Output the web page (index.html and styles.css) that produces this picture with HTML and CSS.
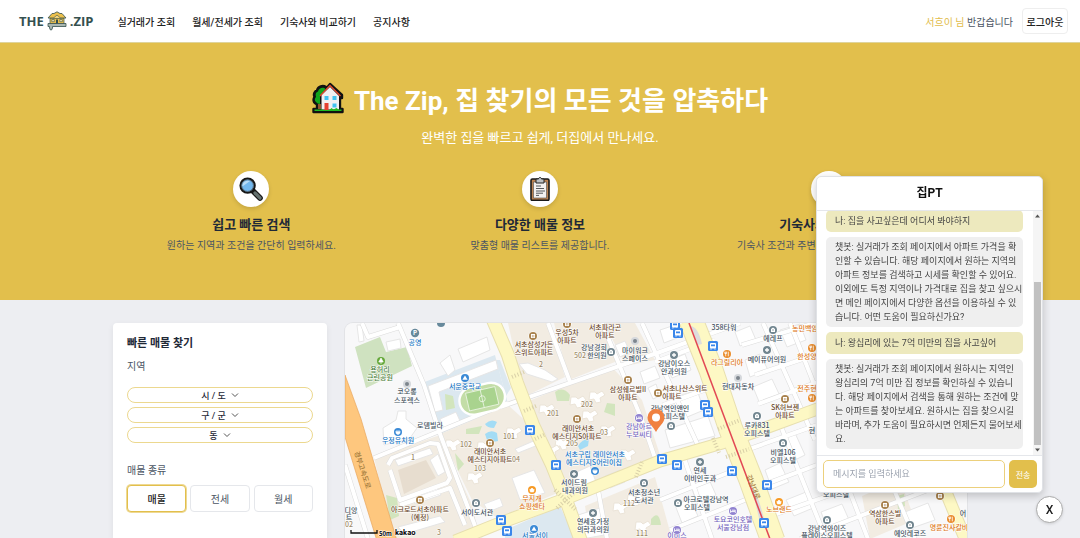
FILE: index.html
```html
<!DOCTYPE html>
<html lang="ko">
<head>
<meta charset="utf-8">
<meta name="viewport" content="width=device-width, initial-scale=1">
<title>THE.ZIP</title>
<link rel="stylesheet" href="styles.css">
</head>
<body>
<div class="app">
  <header class="topbar">
    <a class="logo" href="#" aria-label="THE.ZIP">
      <span>THE</span>
      <svg class="logo-house" viewBox="0 0 20 20" aria-hidden="true">
        <path d="M3 7h14v6H3z" fill="#ecc04c" stroke="#35504f" stroke-width=".7"/>
        <path d="M1 7 5 2.500h2L10 .8l3 1.700h2L19 7z" fill="#ecc04c" stroke="#35504f" stroke-width=".8" stroke-linejoin="round"/>
        <path d="M6.500 7 10 4l3.500 3" fill="#f3d57d" stroke="#35504f" stroke-width=".6"/>
        <path d="M4.800 8.500h2.500v2.200H4.800zm8 0h2.500v2.200h-2.500z" fill="#f8e7ae" stroke="#35504f" stroke-width=".6"/>
        <path d="M9 13V8.500h2V13z" fill="#35504f"/>
        <path d="M1 12.500h18v3H5.500v1.500l-1 2h-1l-1-2V15.500H1z" fill="#a9b6b1" stroke="#35504f" stroke-width=".8" stroke-linejoin="round"/>
      </svg>
      <span>.ZIP</span>
    </a>
    <nav class="nav">
      <a href="#">실거래가 조회</a>
      <a href="#">월세/전세가 조회</a>
      <a href="#">기숙사와 비교하기</a>
      <a href="#">공지사항</a>
    </nav>
    <p class="greeting"><span class="user">서흐이 님</span> 반갑습니다</p>
    <button class="logout" type="button">로그아웃</button>
  </header>

  <section class="hero">
    <h1 class="hero-title">
      <svg class="hero-house" viewBox="0 0 32 32" aria-hidden="true">
        <path d="M1.500 27H5v-5c-4-1-4-5-2.500-7C1 12 3 9 5 8.500 6 4 11 3 14 5l1 .5 3-3.500 12 11v3h-2v11h2.500v3H1.500z" fill="#111" stroke="#111" stroke-width="2.400" stroke-linejoin="round"/>
        <path d="M4 20c-2-2-1-4 0-5-1-3 0-5 2-5.500C7 5 12 5 13.500 7L8 14v8c-2 0-3-1-4-2z" fill="#12a51b"/>
        <path d="M6 22h3v5H6z" fill="#8e562e"/>
        <path d="M9.500 13 18 5l9 9v13.500H9.500z" fill="#f2f0f1"/>
        <path d="m8 14 10-10.500L28.500 14" fill="none" stroke="#e24b32" stroke-width="1.400"/>
        <path d="M12.500 14h4v4h-4zm8 0h4v4h-4zm0 7.500h4v4h-4z" fill="#43c3ef"/>
        <path d="M12.500 21h4v7h-4z" fill="#e64031"/>
        <path d="M2.500 27.500h8l1 .5h6l2-2 2 1.500 3-1.500 2 1.500h3V29h-27z" fill="#1fbb20"/>
      </svg>
      <span>The Zip, 집 찾기의 모든 것을 압축하다</span>
    </h1>
    <p class="hero-sub">완벽한 집을 빠르고 쉽게, 더집에서 만나세요.</p>
    <div class="features">
      <article class="feature">
        <span class="feature-icon">
          <svg viewBox="0 0 24 24" aria-hidden="true">
            <path d="m14 14 7 7" stroke="#161616" stroke-width="5.6" stroke-linecap="round"/>
            <path d="m16 16 5 5" stroke="#65716f" stroke-width="3.2" stroke-linecap="round"/>
            <circle cx="8.6" cy="8.6" r="7.2" fill="#73b8ee" stroke="#171717" stroke-width="2"/>
            <circle cx="8.6" cy="8.6" r="5.8" fill="none" stroke="#52606a" stroke-width=".8"/>
            <path d="M3.4 9.5C3 5 7 2.8 11 4z" fill="#b8dcf7"/>
          </svg>
        </span>
        <h2>쉽고 빠른 검색</h2>
        <p>원하는 지역과 조건을 간단히 입력하세요.</p>
      </article>
      <article class="feature">
        <span class="feature-icon">
          <svg viewBox="0 0 24 24" aria-hidden="true">
            <rect x="3" y="2" width="18" height="21.4" rx="1.4" fill="#bc8353" stroke="#191919" stroke-width="1.6"/>
            <path d="M5.5 5h13v16h-13z" fill="#f3f1f1" stroke="#4b4b4b" stroke-width=".6"/>
            <path d="M8 2h2.5c0-2 3-2 3 0H16v4H8z" fill="#bdc1c5" stroke="#222" stroke-width="1"/>
            <path d="M8 9h5M8 11.5h8M8 14h9M8 16.2h7M8 18.4h3" stroke="#55585c" stroke-width="1"/>
          </svg>
        </span>
        <h2>다양한 매물 정보</h2>
        <p>맞춤형 매물 리스트를 제공합니다.</p>
      </article>
      <article class="feature">
        <span class="feature-icon"></span>
        <h2>기숙사와 비교하기</h2>
        <p>기숙사 조건과 주변 매물을 비교할 수 있어요.</p>
      </article>
    </div>
  </section>

  <main class="content">
    <form class="search">
      <h2>빠른 매물 찾기</h2>
      <p class="label">지역</p>
      <div class="regions">
        <button class="region" type="button">시 / 도 <svg viewBox="0 0 8 8" aria-hidden="true"><path d="m1 2.5 3 3 3-3"/></svg></button>
        <button class="region" type="button">구 / 군 <svg viewBox="0 0 8 8" aria-hidden="true"><path d="m1 2.5 3 3 3-3"/></svg></button>
        <button class="region" type="button">동 <svg viewBox="0 0 8 8" aria-hidden="true"><path d="m1 2.5 3 3 3-3"/></svg></button>
      </div>
      <p class="label">매물 종류</p>
      <div class="kinds">
        <button class="kind kind-on" type="button">매물</button>
        <button class="kind" type="button">전세</button>
        <button class="kind" type="button">월세</button>
      </div>
    </form>

    <section class="map" aria-label="지도">
      <svg viewBox="345 323 622 216" preserveAspectRatio="xMinYMin slice">
        <defs>
          <g id="bus"><rect x="-5" y="-5" width="10" height="10" rx="1.5" fill="#3b87ea"/><rect x="-3" y="-3" width="6" height="5.4" rx="1" fill="#fff"/><path d="M-2-1.6h4v1.8h-4z" fill="#3b87ea"/><path d="M-2 2.4v1.2M2 2.4v1.2" stroke="#fff" stroke-width="1.2"/></g>
          <g id="dot"><circle r="4.6" fill="#fff"/><circle r="4"/></g>
          <g id="apt"><use href="#dot" fill="#a9834f"/><path d="M-2-2h4v4h-4z" fill="#fff"/><path d="M-.6-1v2.400M.8-1v2.400" stroke="#a9834f" stroke-width=".6"/></g>
          <g id="med"><use href="#dot" fill="#71858f"/><path d="M-2 0h4M0-2v4" stroke="#fff" stroke-width="1.3"/></g>
          <g id="off"><use href="#dot" fill="#71858f"/><path d="M-2-1 0-2.400 2-1v3h-4z" fill="#fff"/><circle r=".7" fill="#71858f"/></g>
          <g id="grey"><circle r="4" fill="#d5d8dc"/><circle r="2" fill="#7d858d"/></g>
          <g id="food"><use href="#dot" fill="#ea8d2e"/><path d="M-1.300-2.300v4.600M1.300-2.300v4.600M-2.200-2.300v1.800h1.800v-1.800" stroke="#fff" stroke-width=".8" fill="none"/></g>
          <g id="bag"><use href="#dot" fill="#f69a26"/><path d="M-2.200-.6h4.400l-.6 2.600h-3.200zM-1.200-.6q1.200-2.800 2.400 0" fill="#fff" stroke="#fff" stroke-width=".6"/></g>
          <g id="bed"><use href="#dot" fill="#9183d0"/><path d="M-2.400-1.600v3.400M-2.400.6h4.800v1.200M-1-.8h3.200v1" stroke="#fff" stroke-width=".9" fill="none"/></g>
          <g id="school"><use href="#dot" fill="#3b8ad6"/><path d="M0-2.600 2.600 1.800h-5.200z" fill="#fff"/></g>
          <g id="kid"><use href="#dot" fill="#3b8ad6"/><path d="M-2.200-.6h4.400q0 3-2.200 3t-2.200-3zM-1-2v1M1-2v1" fill="#fff" stroke="#fff" stroke-width=".6"/></g>
          <path id="tower" d="M-7-4h5l2 2 5-3 3 4-5 3 1 4-5 1-2-4-5 1z"/>
        </defs>
        <path fill="#f8f8f9" d="M345 323h622v216H345z"/>

        <g class="zone">
          <path d="M374 458 440 435 472 505 480 539H394z"/>
          <path d="M440 434 508 405 530 425 560 492 497 518 472 500z"/>
          <path d="M508 323H548L565 377 524 397z"/>
          <path d="M554 323H602L620 360 569 380z"/>
          <path d="M524 403 612 367 642 400 660 455 568 493z"/>
          <path d="M585 506 655 477 672 539H590z"/>
          <path d="M604 323H635L655 360 626 366z"/>
          <path d="M862 496 900 480 915 520 870 539z"/>
        </g>
        <path class="campus" d="M422 383 495 355 508 404 440 434z"/>
        <path class="campus" d="M345 323M500 360 511 388 506 396 496 360z"/>
        <path class="campus" d="M505 530 560 506 575 539H505z"/>
        <path class="park" d="M355 347 380 337 386 352 407 347 412 366 366 388z"/>
        <g class="green">
          <path d="M555 392q8-6 15 3l-1 6-12 0z"/><path d="M607 403 615 404 615 416 604 412z"/><path d="M466 429 482 426 479 434 466 434z"/>
          <path d="M455 453 464 464 458 471z"/><path d="M386 495 397 498 399 516 390 520z"/><path d="M651 519q8-10 10 6h-10z"/><path d="M897 496 904 494 905 506 898 510z"/>
          <path d="M445 394 453 396 455 408 446 410z"/>
        </g>
        <g class="water"><path d="M485 424q6-6 12-2l-3 6q-7 0-9-4z"/><path d="M485 434q6-5 12-1l1 8-10 2z"/><path d="M578 446q4-7 11-7l-1 7-8 4z"/></g>

        <g class="block">
          <path d="M458 349 487 337 490 350 463 362z"/><path d="M440 363 450 355 455 370 448 376z"/><path d="M386 342 400 339 401 348 388 351z"/>
          <path d="M383 428 396 420 398 411h8v8l11 9-7 10-26 7z"/><path d="M357 325h5l2 16-5 1z"/>
          <path d="M428 386 496 360 498 369 439 392 443 410 435 412z"/>
          <path d="M440 419 456 412 460 421 444 429z"/>
          <path d="M512 478 534 470 545 493 520 500z"/><path d="M519 364 528 363 545 370 558 379 552 382 527 374z"/>
          <path d="M572 474 590 466 596 482 580 490z"/><path d="M575 516 600 508 610 534 582 539z"/>
          <path d="M515 449 545 436 548 441 518 453z"/><path d="M395 460 430 448 433 454 398 466z"/><path d="M430 460 438 454 445 472 438 476z"/>
          <path d="M412 498 437 488 441 495 415 504z"/><path d="M398 527 440 516 445 522 405 534z"/>
          <path d="M615 345 625 341 630 352 620 357z"/><path d="M640 372 655 366 660 378 644 384z"/><path d="M648 388 656 384 660 396 653 399z"/>
          <path d="M660 330 672 326 677 338 664 343z"/><path d="M665 362 685 354 691 370 672 378z"/><path d="M672 398 697 390 704 410 680 420z"/><path d="M665 430 708 416 715 436 670 448z"/>
          <path d="M735 332 750 326 756 340 740 346z"/><path d="M745 360 760 354 768 370 750 377z"/><path d="M753 387 772 379 780 396 760 404z"/>
          <path d="M780 330 800 324 806 340 787 347z"/><path d="M778 440 795 433 805 455 787 464z"/><path d="M765 470 780 463 789 482 772 489z"/><path d="M690 484 708 477 716 495 697 503z"/>
          <path d="M675 505 690 499 698 516 682 523z"/><path d="M786 500 806 492 813 508 794 516z"/><path d="M821 512 842 504 850 522 828 530z"/><path d="M905 512 928 503 935 520 912 528z"/>
          <path d="M484 504 500 498 503 506 488 512z"/><path d="M605 476 620 470 625 482 610 488z"/>
        </g>
        <g class="tower">
          <use href="#tower" x="485" y="446"/><use href="#tower" x="453" y="444"/><use href="#tower" x="475" y="477"/><use href="#tower" x="547" y="409"/><use href="#tower" x="597" y="396"/>
          <use href="#tower" x="563" y="443"/><use href="#tower" x="608" y="430"/><use href="#tower" x="578" y="401"/><use href="#tower" x="628" y="454"/><use href="#tower" x="635" y="499"/>
          <use href="#tower" x="643" y="526"/><use href="#tower" x="514" y="432"/><use href="#tower" x="552" y="450"/><use href="#tower" x="621" y="507"/><use href="#tower" x="590" y="415"/>
        </g>

        <g class="lane-edge">
          <path d="M398 323 424 385 440 434 480 539M362 323 368 337 400 327"/><path d="M345 465 368 539M374 458 508 403"/>
          <path d="M500 407 660 352 740 323M548 323 570 382M602 323 642 420 655 458"/>
          <path d="M642 323 700 450M655 362 715 340M663 405 718 385M683 455 712 539M660 500 740 468M670 530 750 498"/>
          <path d="M742 345 825 320M755 375 830 350M758 404 845 372M763 323 815 440M790 323 840 450"/>
          <path d="M780 424 826 539M735 454 820 424M750 490 830 460M765 518 850 488 967 450M800 539 967 475M850 492 868 539M892 485 915 539"/>
          <path d="M388 465 392 458 430 443 438 444 450 478 447 483 400 500 390 470M400 505 450 488 465 525M597 484 607 539"/>
        </g>
        <g class="lane">
          <path d="M398 323 424 385 440 434 480 539M362 323 368 337 400 327"/><path d="M345 465 368 539M374 458 508 403"/>
          <path d="M500 407 660 352 740 323M548 323 570 382M602 323 642 420 655 458"/>
          <path d="M642 323 700 450M655 362 715 340M663 405 718 385M683 455 712 539M660 500 740 468M670 530 750 498"/>
          <path d="M742 345 825 320M755 375 830 350M758 404 845 372M763 323 815 440M790 323 840 450"/>
          <path d="M780 424 826 539M735 454 820 424M750 490 830 460M765 518 850 488 967 450M800 539 967 475M850 492 868 539M892 485 915 539"/>
          <path d="M388 465 392 458 430 443 438 444 450 478 447 483 400 500 390 470M400 505 450 488 465 525M597 484 607 539"/>
        </g>
        <g class="parking"><path d="M398 470 426 460 436 478 404 494z"/><path d="M405 508 440 498"/></g>

        <g transform="rotate(-13 481 398)">
          <rect x="459" y="385" width="46" height="28" rx="14" fill="#c3dda7" stroke="#fff" stroke-width="2.400"/>
          <rect x="467" y="390" width="30" height="18" fill="#a9d38e" stroke="#fff" stroke-width=".6"/>
          <path d="M482 390v18" stroke="#fff" stroke-width=".6"/><circle cx="482" cy="399" r="3" fill="none" stroke="#fff" stroke-width=".6"/>
        </g>

        <g class="avenue-edge"><path stroke-width="14" d="M493 320 508 355 517 383 533 425 552 465 566 500 581 541"/><path stroke-width="13" d="M455 541 500 523 565 499 660 461 722 443 760 430 820 408 900 380"/><path stroke-width="25" d="M691 320 711 370 730 427 751 480 773 541"/><path stroke-width="13" d="M943 485 966 541"/></g>
        <g class="avenue"><path stroke-width="12" d="M493 320 508 355 517 383 533 425 552 465 566 500 581 541"/><path stroke-width="11" d="M455 541 500 523 565 499 660 461 722 443 760 430 820 408 900 380"/><path stroke-width="23" d="M691 320 711 370 730 427 751 480 773 541"/><path stroke-width="11" d="M943 485 966 541"/></g>
        <g class="crosswalk"><path d="M512 377 524 372M524 411 536 406M535 439 546 434M555 490 576 510M557 508 575 492M718 429 740 420M726 457 749 449M713 438 719 453M636 477 642 462"/></g>
        <path d="M690 326q8 0 12 18l-4 1zM751 484q6 6 15 42l-5 1z" fill="#ddd"/>
        <path d="M345 375 361 419 397 541H377L345 437z" fill="#fec77e" stroke="#e8a65d" stroke-width=".7"/>
        <path d="M689 323 770 539" stroke="#e24854" stroke-width="1.500"/>

        <g class="num"><text x="466" y="447">102</text><text x="480" y="471">103</text><text x="413" y="460">1</text><text x="439" y="535">3</text><text x="509" y="439">101</text><text x="553" y="416">201</text><text x="587" y="407">202</text><text x="572" y="446">205</text><text x="580" y="358">502</text><text x="541" y="367">2</text><text x="629" y="506">112</text><text x="642" y="536">111</text><text x="349" y="527">02</text><text x="516" y="462">04</text><text x="604" y="435">03</text></g>

        <g class="t-dark">
          <text x="407" y="394">코오롱</text><text x="407" y="403">스포렉스</text><text x="430" y="428">로뎀빌라</text><text x="477" y="515">서이도서관</text><text x="351" y="513">디앙</text><text x="349" y="520">트</text>
          <text x="635" y="353">마이워크</text><text x="635" y="361">스페이스</text><text x="594" y="350">강남경희</text><text x="597" y="358">한의원</text><text x="574" y="485">서이드림</text><text x="575" y="493">내과의원</text>
          <text x="593" y="524">연세효가정</text><text x="593" y="532">의학과의원</text><text x="644" y="495">서초청소년</text><text x="644" y="503">도서관</text><text x="724" y="330">358타워</text><text x="773" y="341">에레프</text><text x="767" y="362">메이퓨어의원</text>
          <text x="674" y="366">강남이오스</text><text x="674" y="374">안과의원</text><text x="738" y="389">현대자동차</text><text x="670" y="411">강남역인앤인</text><text x="672" y="419">오피스텔</text><text x="757" y="428">루카831</text><text x="757" y="436">오피스텔</text>
          <text x="783" y="455">비엘106</text><text x="783" y="463">오피스텔</text><text x="700" y="473">연세</text><text x="700" y="481">이비인후과</text><text x="706" y="502">아크로텔강남역</text><text x="697" y="510">오피스텔</text>
          <text x="827" y="531">강남역와이즈</text><text x="827" y="538">플레이스오피스텔</text><text x="910" y="536">에잇레코즈</text><text x="836" y="497">오피스텔</text><text x="963" y="516">어</text><text x="812" y="433">현</text>
        </g>
        <g class="t-brown">
          <text x="534" y="347">서초삼성가든</text><text x="534" y="355">스위트아파트</text><text x="567" y="335">우성5차</text><text x="567" y="343">아파트</text><text x="605" y="330">서초파라곤</text><text x="605" y="338">아파트</text><text x="628" y="392">삼성쉐르빌II</text><text x="628" y="400">아파트</text>
          <text x="490" y="454">래미안서초</text><text x="490" y="462">에스티지아파트</text><text x="578" y="431">래미안서초</text><text x="577" y="439">에스티지S아파트</text><text x="420" y="512">아크로드서초아파트</text><text x="420" y="520">(예정)</text>
          <text x="685" y="391">서초나산스위트</text><text x="672" y="399">아파트</text><text x="785" y="410">SK허브젠</text><text x="785" y="418">아파트</text><text x="885" y="516">역삼한스빌</text><text x="885" y="524">아파트</text>
        </g>
        <g class="t-blue"><text x="415" y="345">공영</text><text x="465" y="389">서운중학교</text><text x="398" y="443">우정유치원</text><text x="595" y="457">서초구립 래미안서초</text><text x="594" y="465">에스티지S어린이집</text><text x="535" y="538">서울서이</text></g>
        <g class="t-green"><text x="380" y="372">용허리</text><text x="380" y="380">근린공원</text></g>
        <g class="t-orange"><text x="532" y="501">무지개</text><text x="532" y="509">쇼핑센타</text><text x="727" y="365">라그릴리아</text><text x="805" y="331">농민백암</text><text x="807" y="359">한성양</text><text x="807" y="391">전주현</text><text x="779" y="512">노브랜드</text><text x="949" y="530">명륜진사갈비</text></g>
        <g class="t-violet"><text x="639" y="429">강남아르</text><text x="639" y="437">누보씨티</text><text x="733" y="522">토요코인호텔</text><text x="733" y="530">서울강남점</text><text x="677" y="538">이비스</text></g>
        <text class="t-road" x="363" y="477" transform="rotate(72 366 472)">경부고속도로</text>
        <text class="t-road" x="751" y="488" transform="rotate(68 751 488)">강남대로</text>

        <circle cx="415" cy="333" r="4.200" fill="#67899b"/><text x="415" y="335" class="p">P</text><circle cx="441" cy="323" r="4" fill="#67899b"/>
        <circle cx="381" cy="361" r="4" fill="#65a83a"/><path d="m381 358 2.200 4h-4.400zM381 361v3" fill="#fff" stroke="#fff" stroke-width=".7"/>
        <use href="#grey" x="407" y="384"/><use href="#grey" x="635" y="341"/><use href="#grey" x="738" y="378"/>
        <use href="#school" x="465" y="378"/><use href="#school" x="534" y="529"/><use href="#kid" x="398" y="432"/><use href="#kid" x="595" y="471"/>
        <use href="#apt" x="490" y="443"/><use href="#apt" x="420" y="500"/><use href="#apt" x="533" y="336"/><use href="#apt" x="567" y="324"/><use href="#apt" x="577" y="419"/><use href="#apt" x="628" y="380"/><use href="#apt" x="658" y="393"/><use href="#apt" x="785" y="399"/><use href="#apt" x="885" y="505"/><use href="#apt" x="940" y="496"/>
        <use href="#off" x="476" y="503"/><use href="#off" x="611" y="352"/><use href="#off" x="644" y="483"/><use href="#off" x="773" y="330"/><use href="#off" x="671" y="426"/><use href="#off" x="757" y="416"/><use href="#off" x="783" y="443"/><use href="#off" x="678" y="503"/><use href="#off" x="827" y="520"/><use href="#off" x="910" y="525"/>
        <use href="#med" x="574" y="474"/><use href="#med" x="593" y="513"/><use href="#med" x="674" y="355"/><use href="#med" x="767" y="350"/><use href="#med" x="700" y="462"/>
        <use href="#bag" x="532" y="490"/><use href="#bag" x="779" y="502"/><use href="#food" x="727" y="354"/><use href="#food" x="812" y="348"/><use href="#food" x="812" y="398"/><use href="#food" x="951" y="519"/>
        <use href="#bed" x="639" y="418"/><use href="#bed" x="733" y="511"/><use href="#bed" x="677" y="530"/>
        <use href="#bus" x="530" y="430"/><use href="#bus" x="556" y="465"/><use href="#bus" x="501" y="520"/><use href="#bus" x="507" y="531"/><use href="#bus" x="675" y="325"/><use href="#bus" x="678" y="333"/><use href="#bus" x="713" y="346"/><use href="#bus" x="705" y="405"/><use href="#bus" x="708" y="412"/><use href="#bus" x="662" y="459"/><use href="#bus" x="677" y="465"/><use href="#bus" x="732" y="471"/><use href="#bus" x="767" y="485"/><use href="#bus" x="764" y="523"/>
        <path d="M656 432c-3-6-8.500-9-8.500-14.500a8.500 8.500 0 0 1 17 0C664.500 423 659 426 656 432z" fill="#f08140"/><circle cx="656" cy="417.500" r="4" fill="#fff"/>
        <path d="M351 530v3h26v-3" fill="none" stroke="#111" stroke-width="1.300"/>
        <text class="scale" x="379" y="536">50m</text><text class="kakao" x="395" y="535">kakao</text>
      </svg>
    </section>
  </main>
</div>

<aside class="chat" aria-label="집PT">
  <h2 class="chat-head">집PT</h2>
  <div class="chat-body">
    <div class="messages">
      <p class="msg msg-me">나: 집을 사고싶은데 어디서 봐야하지</p>
      <p class="msg">챗봇: 실거래가 조회 페이지에서 아파트 가격을 확<br>인할 수 있습니다. 해당 페이지에서 원하는 지역의<br>아파트 정보를 검색하고 시세를 확인할 수 있어요.<br>이외에도 특정 지역이나 가격대로 집을 찾고 싶으시<br>면 메인 페이지에서 다양한 옵션을 이용하실 수 있<br>습니다. 어떤 도움이 필요하신가요?</p>
      <p class="msg msg-me">나: 왕십리에 있는 7억 미만의 집을 사고싶어</p>
      <p class="msg">챗봇: 실거래가 조회 페이지에서 원하시는 지역인<br>왕십리의 7억 미만 집 정보를 확인하실 수 있습니<br>다. 해당 페이지에서 검색을 통해 원하는 조건에 맞<br>는 아파트를 찾아보세요. 원하시는 집을 찾으시길<br>바라며, 추가 도움이 필요하시면 언제든지 물어보세<br>요.</p>
    </div>
    <div class="scrollbar" aria-hidden="true">
      <svg viewBox="0 0 9 9"><path d="m2 6 2.500-3L7 6z"/></svg>
      <span class="thumb-space"></span>
      <span class="thumb"></span>
      <svg viewBox="0 0 9 9"><path d="m2 3 2.500 3L7 3z"/></svg>
    </div>
  </div>
  <form class="chat-form">
    <input type="text" aria-label="메시지" placeholder="메시지를 입력하세요" autofocus>
    <button type="button">전송</button>
  </form>
</aside>
<button class="chat-close" type="button" aria-label="닫기">X</button>
</body>
</html>
```

FILE: styles.css
```css
* { box-sizing: border-box; margin: 0; }
body, button, input { font-family: Roboto, "Noto Sans CJK KR", sans-serif; }
body { background: #edeef2; color: #1f2937; }
button { padding: 0; background: #fff; color: inherit; }
a { color: inherit; text-decoration: none; }

.app { display: flex; flex-direction: column; height: 100vh; overflow: hidden; }

.topbar { display: flex; align-items: center; height: 43px; padding: 0 12px 0 19px; background: #fff; border-bottom: 1px solid #dfd49c; font-size: 10px; flex: none; }
.logo { display: flex; align-items: center; gap: 3px; color: #35504f; font: 700 14px "Open Sans", sans-serif; font-size: 13px; }
.logo-house { width: 20px; height: 20px; }
.nav { display: flex; gap: 17px; margin-left: 24px; font-weight: 500; color: #222; }
.greeting { margin-left: auto; color: #4b5563; }
.user { color: #e2bd4c; }
.logout { width: 46px; height: 26px; margin-left: 9px; border: 1px solid #eee; border-radius: 4px; font-size: 10px; font-weight: 500; color: #222; }

.hero { flex: none; height: 257px; padding-top: 34px; background: #e2bf4c; text-align: center; }
.hero-title { display: flex; justify-content: center; align-items: center; gap: 10px; height: 42px; font-size: 26px; font-weight: 700; color: #fff; }
.hero-house { width: 32px; height: 32px; }
.hero-sub { margin-top: 9px; font-size: 13px; line-height: 20px; color: #fff; }
.features { display: grid; grid-template-columns: repeat(3, 1fr); gap: 12px; max-width: 854px; margin: 23px auto 0; }
.feature { display: flex; flex-direction: column; align-items: center; }
.feature-icon { display: flex; align-items: center; justify-content: center; width: 36px; height: 36px; border-radius: 50%; background: #fff; box-shadow: 0 2px 4px #0002; }
.feature-icon svg { width: 24px; height: 24px; }
.feature h2 { margin-top: 8px; font-size: 13px; line-height: 20px; }
.feature p { margin-top: 3px; font-size: 10px; line-height: 16px; color: #4b5563; }

.content { flex: 1; min-height: 0; display: flex; gap: 18px; width: 100%; max-width: 854px; margin: 0 auto; padding-top: 23px; }
.search { width: 214px; flex: none; padding: 13px 14px; border-radius: 4px 4px 0 0; background: #fff; box-shadow: 0 2px 6px #0001; }
.search h2 { font-size: 11px; line-height: 16px; }
.label { margin-top: 7px; font-size: 10px; line-height: 16px; color: #4b5563; }
.regions { display: flex; flex-direction: column; gap: 4px; margin: 12px 0 20px; }
.region { display: flex; align-items: center; justify-content: center; gap: 5px; height: 16px; border: 1px solid #ecd88f; border-radius: 8px; font-size: 9px; font-weight: 500; }
.region svg { width: 8px; height: 8px; fill: none; stroke: #555; }
.kinds { display: grid; grid-template-columns: repeat(3, 1fr); gap: 4px; margin-top: 6px; }
.kind { height: 27px; border: 1px solid #e5e7eb; border-radius: 4px; font-size: 10px; color: #4b5563; }
.kind-on { border-color: #e2bf4c; box-shadow: 0 0 0 1px #e2bf4c99; color: #222; font-weight: 500; }

.map { flex: 1; overflow: hidden; border-radius: 8px 8px 0 0; box-shadow: 0 0 0 1px #e2e3e6; }
.map svg { display: block; width: 100%; height: 100%; }
.map text { font-family: "Noto Sans CJK KR", sans-serif; font-size: 7px; font-weight: 500; text-anchor: middle; paint-order: stroke; stroke: #fff; stroke-width: 1px; }
.zone { fill: #f2ece2; }
.campus { fill: #dce8f0; }
.park { fill: #cfe2c0; }
.green { fill: #d2e5bd; }
.water { fill: #a3dcf5; }
.block { fill: #fff; stroke: #e6e6e6; stroke-width: 1; }
.tower { fill: #fff; stroke: #ebe4d8; stroke-width: 1; }
.lane-edge { fill: none; stroke: #dcdcdc; stroke-width: 5; stroke-linejoin: round; }
.lane { fill: none; stroke: #fff; stroke-width: 4; stroke-linejoin: round; }
.parking { fill: #e7ddcf; }
.avenue-edge { fill: none; stroke: #e7dfb0; }
.avenue { fill: none; stroke: #fdf8c4; }
.crosswalk { fill: none; stroke: #d9d0a8; stroke-width: 4; stroke-dasharray: 1 2; }
.num { fill: #a08c6b; }
.t-dark { fill: #42515d; }
.t-brown { fill: #6d4a2c; }
.t-blue { fill: #2176c4; }
.t-green { fill: #467a35; }
.t-orange { fill: #dd7716; }
.t-violet { fill: #7464bd; }
.map .t-road { fill: #a07839; stroke: none; }
.map .p { fill: #fff; font-size: 6px; font-weight: 700; stroke: none; }
.map .scale { font-size: 6px; text-anchor: start; font-weight: 700; }
.map .kakao { font-family: Inter, sans-serif; text-anchor: start; font-weight: 700; }

.chat { position: fixed; right: 37px; bottom: 45px; width: 227px; display: flex; flex-direction: column; overflow: hidden; border: 1px solid #e0e2e6; border-radius: 5px; background: #fff; box-shadow: 0 3px 8px #0003; }
.chat-head { height: 34px; border-bottom: 1px solid #e5e7eb; text-align: center; font-size: 12px; line-height: 33px; color: #111; }
.chat-body { display: flex; height: 244px; }
.messages { flex: 1; display: flex; flex-direction: column; justify-content: flex-end; gap: 5px; padding: 0 10px 6px 9px; overflow: hidden; }
.msg { flex: none; padding: 3px 9px; border-radius: 5px; background: #efefef; font-size: 9px; line-height: 14px; color: #444; white-space: nowrap; }
.msg-me { padding: 4px 9px; background: #ede9be; }
.scrollbar { display: flex; flex-direction: column; width: 9px; background: #f5f5f5; }
.scrollbar svg { width: 9px; height: 10px; fill: #555; }
.thumb-space { flex: 60; }
.thumb { flex: 159; margin: 0 1px; background: #c1c1c1; }
.chat-form { display: flex; gap: 4px; padding: 4px 5px 4px 6px; border-top: 1px solid #e5e7eb; }
.chat-form input { flex: 1; min-width: 0; height: 28px; padding: 0 9px; border: 1px solid #ecd07c; border-radius: 5px; outline: 0; font-size: 9px; }
.chat-form input::placeholder { color: #9ca3af; }
.chat-form button { width: 28px; border: 0; border-radius: 5px; background: #e2bf4c; color: #fff; font-size: 8px; }
.chat-close { position: fixed; right: 17px; bottom: 15px; width: 27px; height: 27px; border: 1px solid #aaa; border-radius: 50%; font-size: 12px; font-weight: 500; color: #222; box-shadow: 0 1px 3px #0002; }
```
